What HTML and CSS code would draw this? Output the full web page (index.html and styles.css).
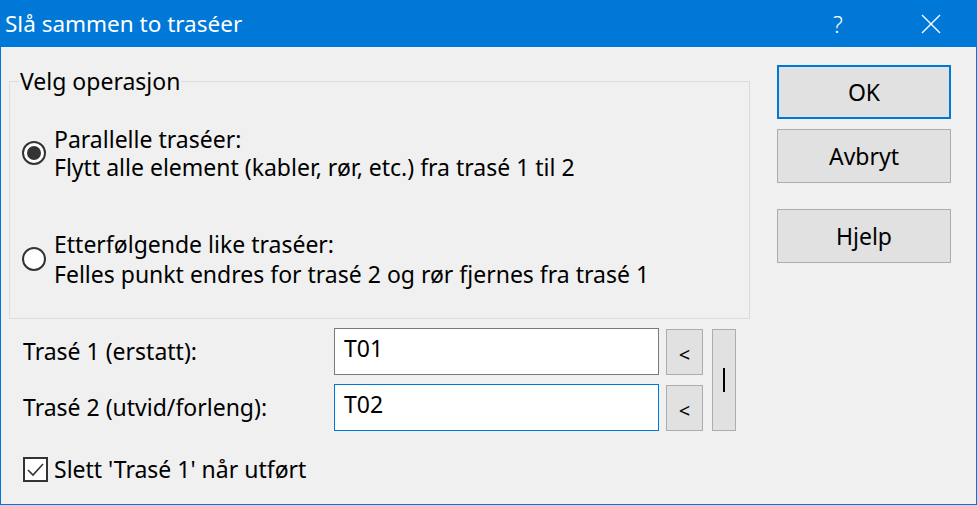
FILE: index.html
```html
<!DOCTYPE html>
<html lang="no">
<head>
  <meta charset="UTF-8">
  <title>Slå sammen to traséer</title>
  <link rel="stylesheet" href="styles.css">
</head>
<body>
  <div class="window">
    <!-- Tittellinje -->
    <div class="titlebar">
      <span class="title">Slå sammen to traséer</span>
      <span class="tb-btn help">?</span>
      <span class="tb-btn close">
        <svg width="20" height="20" viewBox="0 0 20 20">
          <path d="M1 1 L19 19 M19 1 L1 19" stroke="#fff" stroke-width="1.4" fill="none"/>
        </svg>
      </span>
    </div>

    <div class="client">
      <div class="main">
        <!-- Velg operasjon -->
        <fieldset class="group">
          <legend>Velg operasjon</legend>
          <label class="option first">
            <span class="radio checked"></span>
            <span class="option-text">Parallelle traséer:<br>Flytt alle element (kabler, rør, etc.) fra trasé 1 til 2</span>
          </label>
          <label class="option second">
            <span class="radio"></span>
            <span class="option-text">Etterfølgende like traséer:<br>Felles punkt endres for trasé 2 og rør fjernes fra trasé 1</span>
          </label>
        </fieldset>

        <!-- Trasé-felt -->
        <div class="fields">
          <span class="field-label">Trasé 1 (erstatt):</span>
          <div class="input">T01</div>
          <div class="small-btn">&lt;</div>
          <div class="bar-btn"><span class="bar"></span></div>

          <span class="field-label">Trasé 2 (utvid/forleng):</span>
          <div class="input focused">T02</div>
          <div class="small-btn">&lt;</div>
        </div>

        <label class="check-row">
          <span class="checkbox">
            <svg width="21" height="21" viewBox="0 0 21 21">
              <path d="M3 11 L8 16 L18 5" stroke="#333" stroke-width="1.6" fill="none"/>
            </svg>
          </span>
          <span>Slett 'Trasé 1' når utført</span>
        </label>
      </div>

      <!-- Knapper -->
      <div class="side">
        <div class="btn default">OK</div>
        <div class="btn">Avbryt</div>
        <div class="btn help-btn">Hjelp</div>
      </div>
    </div>
  </div>
</body>
</html>
```

FILE: styles.css
```css
/* 1. Generelt */
* {
  margin: 0;
  padding: 0;
  box-sizing: border-box;
}

body {
  font-family: 'Noto Sans', 'Liberation Sans', sans-serif;
  font-size: 23px;
  color: #000;
  background: #f0f0f0;
  overflow: hidden;
}

/* 2. Vindu */
.window {
  width: 977px;
  height: 505px;
  border: 1px solid #0078d7;
  border-top: none;
  background: #f0f0f0;
  display: flex;
  flex-direction: column;
}

/* 3. Tittellinje */
.titlebar {
  height: 47px;
  margin: 0 -1px;
  background: #0078d7;
  color: #fff;
  display: flex;
  align-items: center;
}

.title {
  flex: 1;
  padding-left: 5px;
  font-size: 22.5px;
  padding-bottom: 1px;
}

.tb-btn {
  width: 46px;
  height: 47px;
  display: flex;
  align-items: center;
  justify-content: center;
}

.help {
  font-size: 23px;
  font-weight: 300;
  margin-right: 47px;
}

.close {
  margin-right: 23px;
}

/* 4. Innhold */
.client {
  flex: 1;
  display: flex;
  padding: 19px 0 0 8px;
}

.main {
  width: 741px;
}

/* 5. Gruppeboks */
.group {
  border: 1px solid #dcdcdc;
  height: 253px;
  padding: 0 0 0 12px;
}

.group legend {
  margin-left: -3px;
  padding: 0 1px 0 1px;
  line-height: 30px;
}

.option {
  display: flex;
  align-items: center;
  gap: 8px;
  line-height: 28px;
}

.option.first {
  margin-top: 29px;
}

.option.second {
  margin-top: 48px;
  line-height: 30px;
}

.radio {
  flex: none;
  width: 24px;
  height: 24px;
  border: 2px solid #333;
  border-radius: 50%;
  background: #fff;
  display: flex;
  align-items: center;
  justify-content: center;
}

.radio.checked::after {
  content: '';
  width: 14px;
  height: 14px;
  border-radius: 50%;
  background: #333;
}

/* 6. Felt */
.fields {
  display: grid;
  grid-template-columns: 311px 325px 44px 33px;
  grid-template-rows: 47px 47px;
  row-gap: 9px;
  margin: 9px 0 0 14px;
  align-items: center;
}

.field-label {
  padding-bottom: 2px;
}

.input {
  height: 47px;
  background: #fff;
  border: 1px solid #7a7a7a;
  padding: 3px 0 0 9px;
  font-size: 23px;
  line-height: 32px;
}

.input.focused {
  border-color: #0078d7;
}

.small-btn {
  justify-self: end;
  width: 37px;
  height: 46px;
  background: #e1e1e1;
  border: 1px solid #adadad;
  display: flex;
  align-items: center;
  justify-content: center;
  padding-top: 6px;
  font-size: 20px;
}

.bar-btn {
  grid-row: 1 / 3;
  grid-column: 4;
  justify-self: end;
  align-self: stretch;
  margin-top: 1px;
  width: 24px;
  background: #e1e1e1;
  border: 1px solid #adadad;
  display: flex;
  align-items: center;
  justify-content: center;
}

.bar {
  width: 1.5px;
  height: 24px;
  background: #000;
}

/* 7. Avkrysning */
.check-row {
  display: flex;
  align-items: center;
  gap: 6px;
  margin: 22px 0 0 14px;
}

.checkbox {
  flex: none;
  width: 25px;
  height: 25px;
  border: 2px solid #333;
  background: #fff;
  display: flex;
  align-items: center;
  justify-content: center;
}

/* 8. Knapper */
.side {
  display: flex;
  flex-direction: column;
  margin: -1px 0 0 27px;
}

.btn {
  width: 174px;
  height: 54px;
  background: #e1e1e1;
  border: 1px solid #adadad;
  display: flex;
  align-items: center;
  justify-content: center;
  margin-bottom: 10px;
}

.btn.default {
  border: 2px solid #0078d7;
}

.btn.help-btn {
  margin-top: 16px;
}
```
